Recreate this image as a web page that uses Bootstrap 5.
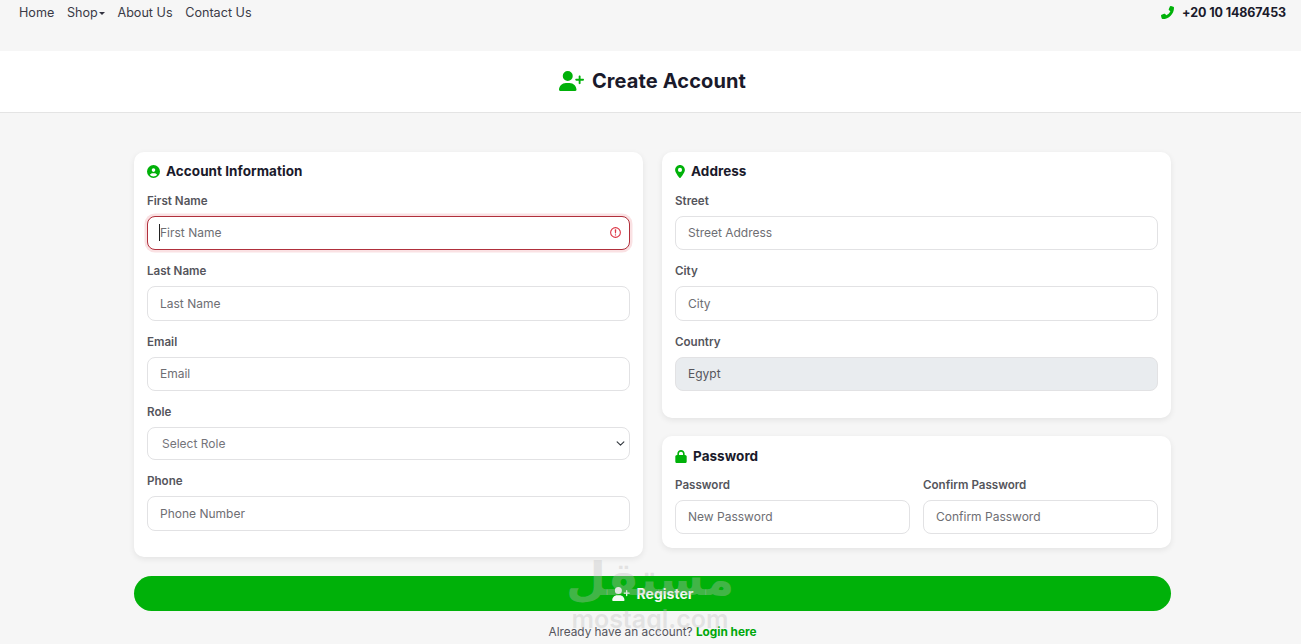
<!DOCTYPE html>
<html lang="en">
<head>
<meta charset="utf-8">
<title>Create Account</title>
<link href="https://cdn.jsdelivr.net/npm/bootstrap@5.3.0/dist/css/bootstrap.min.css" rel="stylesheet">
<style>
body{background:#f6f6f6;font-family:Inter,"Liberation Sans",sans-serif;color:#1a1a2b;height:644px;overflow:hidden;position:relative}
.ico{fill:#00b109;flex:none}
.topbar{height:51px;padding:0 15px 0 19px;align-items:flex-start;background:#f6f6f6}
.topbar .navbar-nav{gap:12.7px;flex-direction:row;margin-top:5px}
.topbar .nav-link{padding:0;font-size:12.6px;line-height:16px;color:#3a3a46}
.shop-link::after{border-top-color:#333340;margin-left:1px;border-width:3px 3px 0;vertical-align:2px}
.phone-num{font-size:12.5px;font-weight:700;line-height:16px;margin-top:5px;color:#1a1a2b;letter-spacing:-.1px}
.page-head{height:62px;background:#fff;border-bottom:1px solid #e4e4e4;padding:0 0 2px 4px}
.page-head h1{font-size:20px;font-weight:700;margin:0;letter-spacing:.12px}
.form-wrap{width:1037px;margin:39px 0 0 134px}
.col-pair{display:grid;grid-template-columns:509px 509px;gap:19px}
.panel{background:#fff;border:0;border-radius:10px;box-shadow:0 2px 6px rgba(0,0,0,.08);padding:11px 13px 0}
.panel-addr{height:266px;margin-bottom:18px}
.panel-account{height:405px}
.panel-pass{height:112px;padding-top:12px}
.panel-title{font-size:13.5px;font-weight:700;line-height:17px;margin:0 0 13.6px;gap:6px;color:#1a1a2b;letter-spacing:.05px}
.panel-pass .panel-title{margin-bottom:12.6px}
.fld-label{display:block;font-size:11.6px;font-weight:600;color:#55555c;line-height:15px;margin:0 0 7px}
.fld{margin-bottom:14px}
.fld .form-control,.fld .form-select{height:34.5px;min-height:0;border:1px solid #e2e2e4;border-radius:8px;font-size:12px;padding:0 12px;color:#555;box-shadow:none}
.fld .form-control::placeholder{color:#6e6e73}
.fld .form-select{height:33px;margin-top:1px;padding-left:14px;color:#74747a;background-position:right 3px center;background-size:11px 9px;border-radius:8px}
.fld .form-control:disabled{background:#e9ecef;color:#55555c}
.fld .form-control.is-invalid{border-color:#b0303c;box-shadow:0 0 0 2.5px rgba(220,53,69,.15);padding-right:30px;background-position:right 7px center;background-size:13px 13px}
.caret-mark{position:absolute;left:12px;top:8px;width:1px;height:17px;background:#222}
.pass-pair{display:grid;grid-template-columns:1fr 1fr;gap:13px}
.reg-btn{display:flex;width:100%;height:35px;margin-top:19px;align-items:center;justify-content:center;gap:7px;background:#00b109;border:0;color:#f4fbf4;font-size:14px;font-weight:700;padding:0}
.reg-btn .ico{fill:#f4fbf4}
.login-line{font-size:11.8px;color:#55555c;line-height:15px;margin:14px 0 0}
.login-line a{color:#00a80a;font-weight:700;text-decoration:none}
.stamp{position:absolute;left:500px;top:551px;width:300px;text-align:center;pointer-events:none;color:rgba(190,190,190,.36)}
.stamp-ar{font-family:"DejaVu Sans",sans-serif;font-weight:700;font-size:46px;line-height:56px}
.stamp-en{font-family:Inter,sans-serif;font-weight:600;font-size:25px;line-height:24px;margin-top:0}
.corner-mark{position:absolute;left:0;top:0;width:7px;height:5px;border-left:2px solid #333;border-top:2px solid #333;border-top-left-radius:6px}
</style>
</head>
<body>
<span class="corner-mark"></span>
<nav class="navbar topbar justify-content-between">
  <ul class="navbar-nav">
    <li class="nav-item"><a class="nav-link" href="#">Home</a></li>
    <li class="nav-item"><a class="nav-link dropdown-toggle shop-link" href="#">Shop</a></li>
    <li class="nav-item"><a class="nav-link" href="#">About Us</a></li>
    <li class="nav-item"><a class="nav-link" href="#">Contact Us</a></li>
  </ul>
  <div class="d-flex align-items-start gap-2">
    <svg class="ico" style="margin-top:6px" width="13" height="13" viewBox="0 0 512 512"><path transform="translate(512 0) scale(-1 1)" d="M164.9 24.6c-7.7-18.6-28-28.5-47.4-23.2l-88 24C12.1 30.2 0 46 0 64C0 311.4 200.6 512 448 512c18 0 33.8-12.1 38.6-29.5l24-88c5.3-19.4-4.6-39.7-23.2-47.4l-96-40c-16.3-6.8-35.2-2.1-46.3 11.6L304.7 368C234.3 334.7 177.3 277.7 144 207.3L193.3 167c13.7-11.2 18.4-30 11.6-46.3l-40-96z"/></svg>
    <span class="phone-num">+20 10 14867453</span>
  </div>
</nav>

<header class="page-head d-flex align-items-center justify-content-center gap-2">
  <svg class="ico" width="25" height="20" viewBox="0 0 640 512"><path d="M96 128a128 128 0 1 1 256 0A128 128 0 1 1 96 128zM0 482.3C0 383.8 79.8 304 178.3 304h91.4C368.2 304 448 383.8 448 482.3c0 16.4-13.3 29.7-29.7 29.7H29.7C13.3 512 0 498.7 0 482.3zM504 312V248H440c-13.3 0-24-10.7-24-24s10.7-24 24-24h64V136c0-13.3 10.7-24 24-24s24 10.7 24 24v64h64c13.3 0 24 10.7 24 24s-10.7 24-24 24H552v64c0 13.3-10.7 24-24 24s-24-10.7-24-24z"/></svg>
  <h1>Create Account</h1>
</header>

<main class="form-wrap">
  <form>
    <div class="col-pair">
      <section class="card panel panel-account">
        <h2 class="panel-title d-flex align-items-center">
          <svg class="ico" width="13" height="13" viewBox="0 0 512 512"><path d="M399 384.2C376.9 345.8 335.4 320 288 320H224c-47.4 0-88.9 25.8-111 64.2c35.2 39.2 86.2 63.8 143 63.8s107.8-24.7 143-63.8zM0 256a256 256 0 1 1 512 0A256 256 0 1 1 0 256zm256 16a72 72 0 1 0 0-144 72 72 0 1 0 0 144z"/></svg>
          Account Information
        </h2>
        <div class="fld">
          <label class="fld-label" for="fn">First Name</label>
          <div class="position-relative">
            <input id="fn" class="form-control is-invalid" placeholder="First Name">
            <span class="caret-mark"></span>
          </div>
        </div>
        <div class="fld"><label class="fld-label" for="ln">Last Name</label><input id="ln" class="form-control" placeholder="Last Name"></div>
        <div class="fld"><label class="fld-label" for="em">Email</label><input id="em" class="form-control" placeholder="Email"></div>
        <div class="fld">
          <label class="fld-label" for="ro">Role</label>
          <select id="ro" class="form-select"><option>Select Role</option></select>
        </div>
        <div class="fld"><label class="fld-label" for="ph">Phone</label><input id="ph" class="form-control" placeholder="Phone Number"></div>
      </section>

      <div>
        <section class="card panel panel-addr">
          <h2 class="panel-title d-flex align-items-center">
            <svg class="ico" width="10" height="13" viewBox="0 0 384 512"><path d="M215.7 499.2C267 435 384 279.4 384 192C384 86 298 0 192 0S0 86 0 192c0 87.4 117 243 168.3 307.2c12.3 15.3 35.1 15.3 47.4 0zM192 112a80 80 0 1 1 0 160 80 80 0 1 1 0-160z"/></svg>
            Address
          </h2>
          <div class="fld"><label class="fld-label" for="st">Street</label><input id="st" class="form-control" placeholder="Street Address"></div>
          <div class="fld"><label class="fld-label" for="ci">City</label><input id="ci" class="form-control" placeholder="City"></div>
          <div class="fld"><label class="fld-label" for="co">Country</label><input id="co" class="form-control" value="Egypt" disabled></div>
        </section>
        <section class="card panel panel-pass">
          <h2 class="panel-title d-flex align-items-center">
            <svg class="ico" width="12" height="13" viewBox="0 0 448 512"><path d="M144 144v48H304V144c0-44.2-35.8-80-80-80s-80 35.8-80 80zM80 192V144C80 64.5 144.5 0 224 0s144 64.5 144 144v48h16c35.3 0 64 28.7 64 64V448c0 35.3-28.7 64-64 64H64c-35.3 0-64-28.7-64-64V256c0-35.3 28.7-64 64-64H80z"/></svg>
            Password
          </h2>
          <div class="pass-pair">
            <div class="fld"><label class="fld-label" for="pw">Password</label><input id="pw" class="form-control" placeholder="New Password"></div>
            <div class="fld"><label class="fld-label" for="cp">Confirm Password</label><input id="cp" class="form-control" placeholder="Confirm Password"></div>
          </div>
        </section>
      </div>
    </div>
    <button type="button" class="btn rounded-pill reg-btn">
      <svg class="ico" width="18" height="14" viewBox="0 0 640 512"><path d="M96 128a128 128 0 1 1 256 0A128 128 0 1 1 96 128zM0 482.3C0 383.8 79.8 304 178.3 304h91.4C368.2 304 448 383.8 448 482.3c0 16.4-13.3 29.7-29.7 29.7H29.7C13.3 512 0 498.7 0 482.3zM504 312V248H440c-13.3 0-24-10.7-24-24s10.7-24 24-24h64V136c0-13.3 10.7-24 24-24s24 10.7 24 24v64h64c13.3 0 24 10.7 24 24s-10.7 24-24 24H552v64c0 13.3-10.7 24-24 24s-24-10.7-24-24z"/></svg>
      Register
    </button>
    <p class="login-line text-center">Already have an account? <a href="#">Login here</a></p>
  </form>
</main>
<div class="stamp" lang="ar">
  <div class="stamp-ar" dir="rtl">مستقل</div>
  <div class="stamp-en">mostaql.com</div>
</div>
<script src="https://cdn.jsdelivr.net/npm/bootstrap@5.3.0/dist/js/bootstrap.bundle.min.js"></script>
</body>
</html>
